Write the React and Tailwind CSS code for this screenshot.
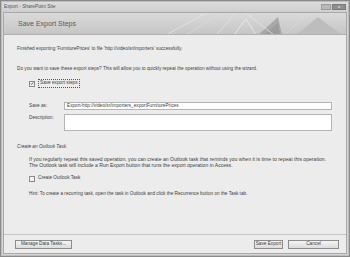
import React from "react";

const F = { fontFamily: '"Liberation Sans", Arial, sans-serif' };

function Check({ checked }) {
  return (
    <span className="inline-flex w-[6px] h-[6px] border border-[#8a8a8a] bg-[#f4f4f4] items-center justify-center shrink-0">
      {checked && (
        <svg width="5" height="5" viewBox="0 0 5 5">
          <path d="M0.8 2.5 L2 3.8 L4.3 1" stroke="#3a3a3a" strokeWidth="0.9" fill="none" />
        </svg>
      )}
    </span>
  );
}

export default function App() {
  return (
    <div
      style={F}
      className="w-[350px] h-[257px] bg-[#8a8a8a] p-[1px] text-[#3c3c3c] overflow-hidden"
    >
      <div className="w-full h-full flex flex-col bg-[#d6d6d6] border border-[#bdbdbd]">
        {/* title bar */}
        <div className="h-[10px] flex items-center justify-between pl-[2px] pr-[2px] bg-gradient-to-b from-[#dcdcdc] to-[#cfcfcf]">
          <span className="text-[4.8px] leading-none text-[#555]">Export - SharePoint Site</span>
          <div className="flex gap-[1px] items-center">
            <div className="w-[10px] h-[6px] bg-[#b8b8b8] border border-[#9c9c9c]" />
            <div className="w-[14px] h-[6px] bg-[#8f8f8f] border border-[#7a7a7a] flex items-center justify-center">
              <span className="text-[4px] leading-none text-white">x</span>
            </div>
          </div>
        </div>
        <div className="flex-1 flex flex-col mx-[1px] mb-[1px] border border-[#a8a8a8] bg-[#ececec]">
          {/* header */}
          <div className="relative h-[22px] flex items-center pl-[14px] bg-gradient-to-b from-[#dadada] to-[#c6c6c6] border-b border-[#b0b0b0] overflow-hidden">
            <svg className="absolute right-0 top-0" width="200" height="22" viewBox="0 0 200 22">
              <path d="M20 22 L60 0" stroke="#e6e6e6" strokeWidth="0.8" />
              <path d="M40 22 L75 0" stroke="#dedede" strokeWidth="0.6" />
              <path d="M70 22 L90 0" stroke="#e2e2e2" strokeWidth="0.8" />
              <path d="M88 22 L100 6 L110 22" stroke="#e8e8e8" strokeWidth="1" fill="none" />
              <polygon points="112,22 132,4 136,22" fill="#a8a8a8" />
              <polygon points="118,22 132,10 134,22" fill="#9c9c9c" />
              <path d="M100 0 L128 22" stroke="#e4e4e4" strokeWidth="0.8" />
              <polygon points="150,22 172,4 196,22" fill="#bdbdbd" />
              <path d="M140 22 L160 0" stroke="#dcdcdc" strokeWidth="0.6" />
            </svg>
            <span className="relative text-[7px] leading-none text-[#5a5a5a]">Save Export Steps</span>
          </div>
          {/* body */}
          <div className="flex-1 flex flex-col pl-[13px] pr-[14px] pt-[12px] text-[4.7px] leading-none">
            <div>Finished exporting 'FurniturePrices' to file 'http://video/sr/importers' successfully.</div>
            <div className="mt-[15px]">Do you want to save these export steps? This will allow you to quickly repeat the operation without using the wizard.</div>
            <div className="mt-[8px] ml-[12px] flex items-center gap-[3px]">
              <Check checked />
              <span className="border border-dotted border-[#555] px-[1px] py-[1px]">Save export steps</span>
            </div>
            <div className="mt-[14px] ml-[12px] flex items-center">
              <span className="w-[35px]">Save as:</span>
              <div className="flex-1 h-[8px] bg-white border border-[#b4b4b4] flex items-center pl-[2px]">
                Export-http://video/sr/importers_exportFurniturePrices
              </div>
            </div>
            <div className="mt-[4px] ml-[12px] flex items-start">
              <span className="w-[35px] pt-[2px]">Description:</span>
              <div className="flex-1 h-[17px] bg-white border border-[#b4b4b4]" />
            </div>
            <div className="mt-[14px] italic">Create an Outlook Task.</div>
            <div className="mt-[6px] ml-[12px] leading-[6.5px] text-[5.1px]">
              <div>If you regularly repeat this saved operation, you can create an Outlook task that reminds you when it is time to repeat this operation.</div>
              <div>The Outlook task will include a Run Export button that runs the export operation in Access.</div>
            </div>
            <div className="mt-[7px] ml-[12px] flex items-center gap-[3px]">
              <Check />
              <span>Create Outlook Task</span>
            </div>
            <div className="mt-[10px] ml-[12px]">Hint: To create a recurring task, open the task in Outlook and click the Recurrence button on the Task tab.</div>
          </div>
          {/* footer */}
          <div className="h-[19px] border-t border-[#c4c4c4] flex items-center justify-between pl-[11px] pr-[7px]">
            <div className="h-[9px] w-[57px] border border-[#8c8c8c] bg-gradient-to-b from-[#f4f4f4] to-[#dcdcdc] flex items-center justify-center text-[4.7px] leading-none">
              Manage Data Tasks...
            </div>
            <div className="flex gap-[5px]">
              <div className="h-[9px] w-[29px] border border-[#8c8c8c] bg-gradient-to-b from-[#f4f4f4] to-[#dcdcdc] flex items-center justify-center text-[4.7px] leading-none">
                Save Export
              </div>
              <div className="h-[9px] w-[51px] border border-[#8c8c8c] bg-gradient-to-b from-[#f4f4f4] to-[#dcdcdc] flex items-center justify-center text-[4.7px] leading-none">
                Cancel
              </div>
            </div>
          </div>
        </div>
      </div>
    </div>
  );
}
